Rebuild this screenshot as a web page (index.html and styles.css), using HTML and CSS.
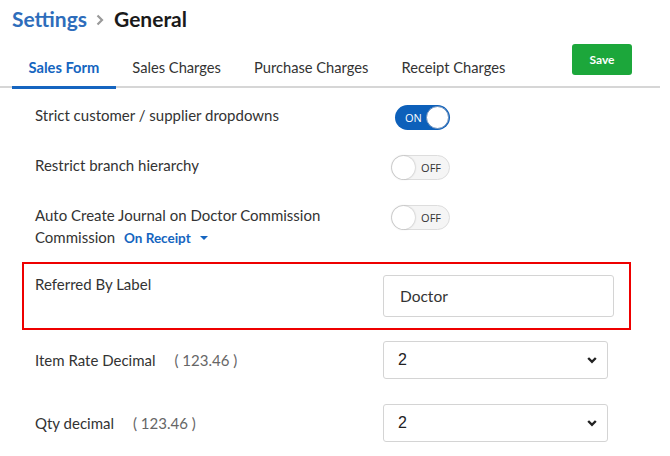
FILE: index.html
```html
<!DOCTYPE html>
<html>
<head>
<meta charset="utf-8">
<link rel="stylesheet" href="styles.css">
</head>
<body>
<div class="page">
  <h1 class="title"><span class="crumb">Settings</span><svg class="sep" width="8" height="12" viewBox="0 0 8 12"><path d="M1.5 1.5 L6 6 L1.5 10.5" fill="none" stroke="#9a9a9a" stroke-width="2.2"/></svg><span class="current">General</span></h1>
  <div class="tabbar">
    <div class="tab active">Sales Form</div>
    <div class="tab">Sales Charges</div>
    <div class="tab">Purchase Charges</div>
    <div class="tab">Receipt Charges</div>
    <button class="save">Save</button>
  </div>

  <div class="form">
    <div class="row r1">
      <div class="label">Strict customer / supplier dropdowns</div>
      <div class="ctrl"><div class="toggle on"><span class="txt">ON</span><span class="knob"></span></div></div>
    </div>
    <div class="row r2">
      <div class="label">Restrict branch hierarchy</div>
      <div class="ctrl"><div class="toggle off"><span class="knob"></span><span class="txt">OFF</span></div></div>
    </div>
    <div class="row r3">
      <div class="label">Auto Create Journal on Doctor Commission<br>Commission <span class="link">On Receipt</span><span class="caret"></span></div>
      <div class="ctrl"><div class="toggle off"><span class="knob"></span><span class="txt">OFF</span></div></div>
    </div>
    <div class="highlight">
      <div class="label">Referred By Label</div>
      <div class="field"><div class="input">Doctor</div></div>
    </div>
    <div class="srow s1">
      <div class="label">Item Rate Decimal<span class="hint">( 123.46 )</span></div>
      <div class="field">
        <div class="select"><span>2</span>
          <svg class="chev" width="10" height="8" viewBox="0 0 10 8"><path d="M1.2 2 L5 5.8 L8.8 2" fill="none" stroke="#222" stroke-width="2.4"/></svg>
        </div>
      </div>
    </div>
    <div class="srow s2">
      <div class="label">Qty decimal<span class="hint">( 123.46 )</span></div>
      <div class="field">
        <div class="select"><span>2</span>
          <svg class="chev" width="10" height="8" viewBox="0 0 10 8"><path d="M1.2 2 L5 5.8 L8.8 2" fill="none" stroke="#222" stroke-width="2.4"/></svg>
        </div>
      </div>
    </div>
  </div>
</div>
</body>
</html>
```
FILE: styles.css
```css
* { box-sizing: border-box; }
html, body { margin: 0; padding: 0; background: #fff; }
body {
  font-family: Lato, "Open Sans", "Liberation Sans", sans-serif;
  color: #333;
  width: 670px;
  height: 456px;
  overflow: hidden;
}
.title {
  margin: 0;
  padding: 7px 0 0 12px;
  height: 31px;
  font-size: 21px;
  line-height: 24px;
  font-weight: 700;
  display: flex;
  align-items: center;
}
.crumb { color: #2e6dbb; }
.sep { margin: 1px 10px 0 9px; flex: none; }
.current { color: #1a1a1a; }

.tabbar {
  margin-top: 13px;
  width: 660px;
  height: 44px;
  border-bottom: 2px solid #d6d6d6;
  padding-left: 12px;
  display: flex;
  align-items: flex-end;
}
.tab {
  font-size: 14.7px;
  line-height: 20px;
  padding: 0 16.5px 9px 16.5px;
  border-bottom: 3px solid transparent;
  margin-bottom: -3px;
  color: #333;
  white-space: nowrap;
}
.tab.active { color: #1565c0; font-weight: 700; border-bottom-color: #1565c0; }
.save {
  margin-left: auto;
  margin-right: 28px;
  align-self: flex-start;
  width: 60px;
  height: 31px;
  border: none;
  border-radius: 3px;
  background: #1ca73b;
  color: #fff;
  font-family: inherit;
  font-size: 12px;
  font-weight: 700;
  padding: 0;
}

.form { padding-top: 16px; }
.row { display: flex; align-items: flex-start; }
.r1, .r2 { height: 50px; }
.r3 { height: 58px; }
.label {
  font-size: 15px;
  line-height: 22px;
  color: #333;
  padding-left: 35px;
  width: 383px;
  flex: none;
}
.ctrl { width: 67px; display: flex; justify-content: flex-end; padding-top: 1px; }
.toggle {
  height: 25px;
  border-radius: 13px;
  display: flex;
  align-items: center;
  font-size: 11px;
  font-family: "Open Sans", Lato, sans-serif;
}
.toggle.on { width: 55px; background: #0d60ba; color: #fff; padding: 0 1px 0 10px; justify-content: space-between; }
.toggle.on .knob { width: 23px; height: 23px; border-radius: 50%; background: #fff; border: 1px solid #6b8fbd; }
.toggle.off { width: 59px; background: #f5f5f5; border: 1px solid #ddd; color: #333; padding: 0 8px 0 0; justify-content: space-between; }
.toggle.off .knob { width: 23px; height: 23px; border-radius: 50%; background: #fff; box-shadow: 0 0 2px rgba(0,0,0,0.35); }

.link { color: #1565c0; font-weight: 700; font-size: 13.5px; margin-left: 5px; }
.caret {
  display: inline-block;
  width: 0; height: 0;
  border-left: 4px solid transparent;
  border-right: 4px solid transparent;
  border-top: 4px solid #1565c0;
  margin-left: 9px;
  vertical-align: 3px;
}

.highlight {
  margin-left: 22px;
  width: 609px;
  height: 68px;
  border: 2px solid #ee0000;
  display: flex;
  align-items: flex-start;
  padding-top: 9px;
}
.highlight .label { padding-left: 11px; width: 359px; }
.highlight .field { padding-top: 2px; }
.input {
  width: 231px;
  height: 42px;
  border: 1px solid #d4d4d4;
  border-radius: 3px;
  padding-left: 16px;
  font-size: 15.5px;
  line-height: 40px;
  color: #333;
}

.srow { display: flex; align-items: center; }
.s1 { margin-top: 11px; }
.s2 { margin-top: 25px; }
.hint { color: #666; margin-left: 19px; }
.select {
  width: 225px;
  height: 38px;
  border: 1px solid #d4d4d4;
  border-radius: 3px;
  padding: 0 10px 0 14px;
  display: flex;
  align-items: center;
  justify-content: space-between;
  font-family: "Liberation Sans", Arial, sans-serif;
  font-size: 16px;
  color: #222;
}
```
